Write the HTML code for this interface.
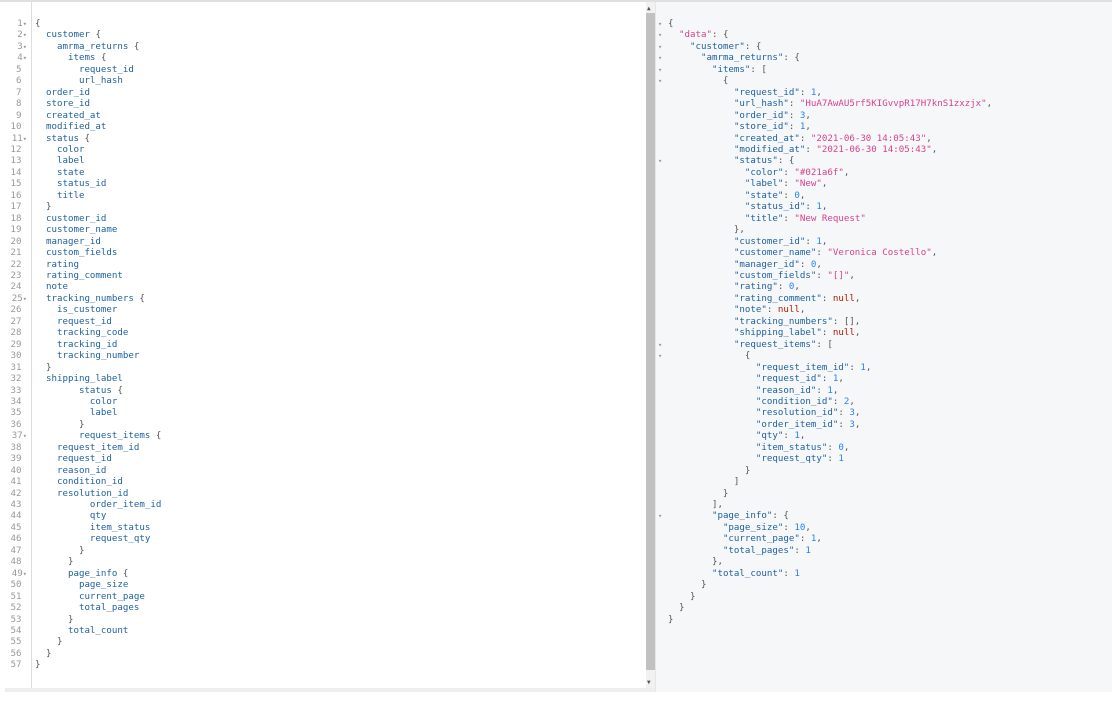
<!DOCTYPE html>
<html><head><meta charset="utf-8"><style>
body{margin:0;width:1112px;height:705px;background:#fff;position:relative;overflow:hidden;font-family:"DejaVu Sans Mono","Liberation Mono",monospace}
.top{position:absolute;left:0;top:0;width:1112px;height:2px;background:#e0e0e0}
.ed{position:absolute;left:5px;top:2px;width:641px;height:686px;background:#fff}
.gut{position:absolute;left:5px;top:2px;width:26px;height:686px;background:#fff;border-right:1px solid #ddd}
.hbar{position:absolute;left:5px;top:688px;width:650px;height:4px;background:#eee}
.sb{position:absolute;left:646px;top:2px;width:9px;height:690px;background:#f1f1f1}
.thumb{position:absolute;left:646px;top:13px;width:9px;height:657px;background:#c1c1c1}
.res{position:absolute;left:655px;top:2px;width:457px;height:690px;background:#f6f7f8;border-left:1px solid #e6e6e6}
pre{margin:0;position:absolute;font-size:9.15px;line-height:11.45px;font-family:"DejaVu Sans Mono","Liberation Mono",monospace}
.ln{left:5px;top:16px;width:22px;text-align:right;color:#999}
.fm{color:#999;font-size:7px}
.q{left:35px;top:16px;color:#1f61a0}
.p{color:#555}
.r{left:668px;top:16px;color:#555}
.k{color:#1f61a0}.s{color:#d64292}.n{color:#2882f9}.nl{color:#b11a04}
.rf{left:658px;top:16px;color:#999;font-size:7px}
.arr{position:absolute;left:647px;font-size:6px;color:#555}
</style></head><body>
<div class="top"></div>
<div class="ed"></div>
<div class="gut"></div>
<div class="sb"></div><div class="thumb"></div>
<div class="arr" style="top:5px">▲</div><div class="arr" style="top:679px">▼</div>
<div class="hbar"></div>
<div class="res"></div>
<pre class="ln" style="top:19px">1<span class="fm">▾</span>
2<span class="fm">▾</span>
3<span class="fm">▾</span>
4<span class="fm">▾</span>
5 
6 
7 
8 
9 
10 
11<span class="fm">▾</span>
12 
13 
14 
15 
16 
17 
18 
19 
20 
21 
22 
23 
24 
25<span class="fm">▾</span>
26 
27 
28 
29 
30 
31 
32 
33 
34 
35 
36 
37<span class="fm">▾</span>
38 
39 
40 
41 
42 
43 
44 
45 
46 
47 
48 
49<span class="fm">▾</span>
50 
51 
52 
53 
54 
55 
56 
57 </pre>
<pre class="q" style="top:19px"><span class="p">{</span>
  customer <span class="p">{</span>
    amrma_returns <span class="p">{</span>
      items <span class="p">{</span>
        request_id
        url_hash
  order_id
  store_id
  created_at
  modified_at
  status <span class="p">{</span>
    color
    label
    state
    status_id
    title
  <span class="p">}</span>
  customer_id
  customer_name
  manager_id
  custom_fields
  rating
  rating_comment
  note
  tracking_numbers <span class="p">{</span>
    is_customer
    request_id
    tracking_code
    tracking_id
    tracking_number
  <span class="p">}</span>
  shipping_label
        status <span class="p">{</span>
          color
          label
        <span class="p">}</span>
        request_items <span class="p">{</span>
    request_item_id
    request_id
    reason_id
    condition_id
    resolution_id
          order_item_id
          qty
          item_status
          request_qty
        <span class="p">}</span>
      <span class="p">}</span>
      page_info <span class="p">{</span>
        page_size
        current_page
        total_pages
      <span class="p">}</span>
      total_count
    <span class="p">}</span>
  <span class="p">}</span>
<span class="p">}</span></pre>
<pre class="rf" style="top:19px">▾
▾
▾
▾
▾
▾
 
 
 
 
 
 
▾
 
 
 
 
 
 
 
 
 
 
 
 
 
 
 
▾
▾
 
 
 
 
 
 
 
 
 
 
 
 
 
▾</pre>
<pre class="r" style="top:19px">{
  <span class="s">"data"</span>: {
    <span class="k">"customer"</span>: {
      <span class="k">"amrma_returns"</span>: {
        <span class="k">"items"</span>: [
          {
            <span class="k">"request_id"</span>: <span class="n">1</span>,
            <span class="k">"url_hash"</span>: <span class="s">"HuA7AwAU5rf5KIGvvpR17H7knS1zxzjx"</span>,
            <span class="k">"order_id"</span>: <span class="n">3</span>,
            <span class="k">"store_id"</span>: <span class="n">1</span>,
            <span class="k">"created_at"</span>: <span class="s">"2021-06-30 14:05:43"</span>,
            <span class="k">"modified_at"</span>: <span class="s">"2021-06-30 14:05:43"</span>,
            <span class="k">"status"</span>: {
              <span class="k">"color"</span>: <span class="s">"#021a6f"</span>,
              <span class="k">"label"</span>: <span class="s">"New"</span>,
              <span class="k">"state"</span>: <span class="n">0</span>,
              <span class="k">"status_id"</span>: <span class="n">1</span>,
              <span class="k">"title"</span>: <span class="s">"New Request"</span>
            },
            <span class="k">"customer_id"</span>: <span class="n">1</span>,
            <span class="k">"customer_name"</span>: <span class="s">"Veronica Costello"</span>,
            <span class="k">"manager_id"</span>: <span class="n">0</span>,
            <span class="k">"custom_fields"</span>: <span class="s">"[]"</span>,
            <span class="k">"rating"</span>: <span class="n">0</span>,
            <span class="k">"rating_comment"</span>: <span class="nl">null</span>,
            <span class="k">"note"</span>: <span class="nl">null</span>,
            <span class="k">"tracking_numbers"</span>: [],
            <span class="k">"shipping_label"</span>: <span class="nl">null</span>,
            <span class="k">"request_items"</span>: [
              {
                <span class="k">"request_item_id"</span>: <span class="n">1</span>,
                <span class="k">"request_id"</span>: <span class="n">1</span>,
                <span class="k">"reason_id"</span>: <span class="n">1</span>,
                <span class="k">"condition_id"</span>: <span class="n">2</span>,
                <span class="k">"resolution_id"</span>: <span class="n">3</span>,
                <span class="k">"order_item_id"</span>: <span class="n">3</span>,
                <span class="k">"qty"</span>: <span class="n">1</span>,
                <span class="k">"item_status"</span>: <span class="n">0</span>,
                <span class="k">"request_qty"</span>: <span class="n">1</span>
              }
            ]
          }
        ],
        <span class="k">"page_info"</span>: {
          <span class="k">"page_size"</span>: <span class="n">10</span>,
          <span class="k">"current_page"</span>: <span class="n">1</span>,
          <span class="k">"total_pages"</span>: <span class="n">1</span>
        },
        <span class="k">"total_count"</span>: <span class="n">1</span>
      }
    }
  }
}</pre>
</body></html>
